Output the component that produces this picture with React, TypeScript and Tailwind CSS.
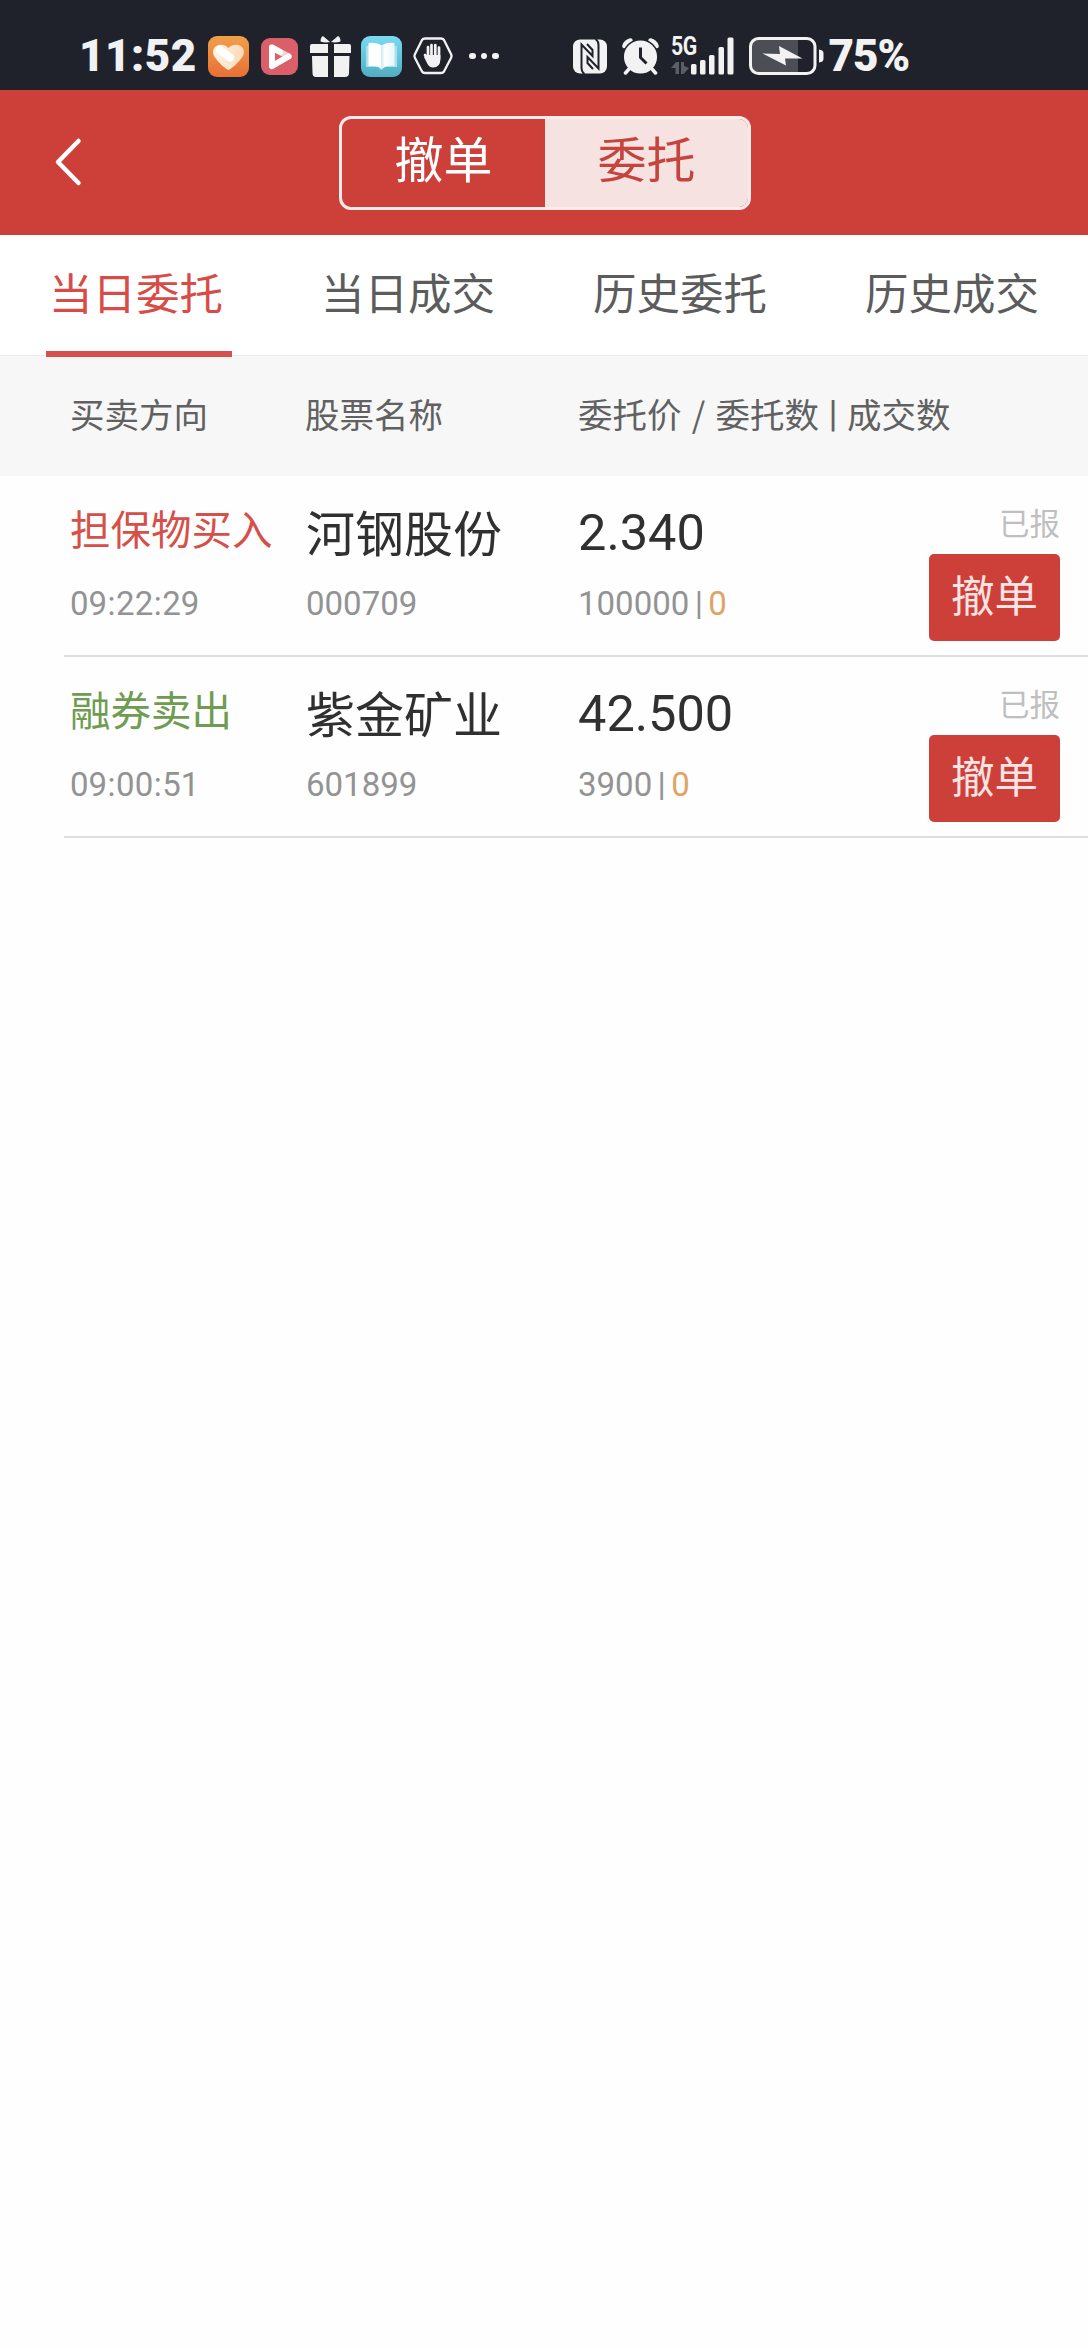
import { useState } from 'react'

type Order = {
  side: 'buy' | 'sell'
  action: string
  time: string
  name: string
  code: string
  price: string
  amount: string
  filled: string
  status: string
}

const orders: Order[] = [
  {
    side: 'buy',
    action: '担保物买入',
    time: '09:22:29',
    name: '河钢股份',
    code: '000709',
    price: '2.340',
    amount: '100000',
    filled: '0',
    status: '已报',
  },
  {
    side: 'sell',
    action: '融券卖出',
    time: '09:00:51',
    name: '紫金矿业',
    code: '601899',
    price: '42.500',
    amount: '3900',
    filled: '0',
    status: '已报',
  },
]

const tabs = ['当日委托', '当日成交', '历史委托', '历史成交']

function HeartIcon() {
  return (
    <svg className="ml-[13px] h-[41px] w-[41px]" viewBox="0 0 41 41">
      <defs>
        <linearGradient id="heartBg" x1="0" y1="0" x2="0" y2="1">
          <stop offset="0" stopColor="#f0a04b" />
          <stop offset="1" stopColor="#e96f35" />
        </linearGradient>
        <linearGradient id="heartFill" x1="0" y1="0" x2="1" y2="0">
          <stop offset="0" stopColor="#fff3e6" />
          <stop offset="1" stopColor="#fbd9b8" />
        </linearGradient>
      </defs>
      <rect width="41" height="41" rx="9" fill="url(#heartBg)" />
      <path d="M20.500 34 C18.500 34 5 22 5 16.500 C5 8 15.500 6.500 20.500 12 C25.500 6.500 36 8 36 16.500 C36 22 22.500 34 20.500 34Z" fill="url(#heartFill)" />
      <path d="M12 14 L22 21.500" stroke="#fff" strokeWidth="8" strokeLinecap="round" />
    </svg>
  )
}

function PlayIcon() {
  return (
    <svg className="ml-3 h-[37px] w-[37px]" viewBox="0 0 37 37">
      <rect width="37" height="37" rx="9" fill="#da5f68" />
      <path d="M11 9.500 L27.500 18.500 L11 28 Z" fill="none" stroke="#f7d3d3" strokeWidth="6" strokeLinejoin="round" />
      <path d="M11 28 V9.500 L19 14 M11 28 L27.500 18.500" fill="none" stroke="#fff" strokeWidth="6" strokeLinecap="round" strokeLinejoin="round" />
    </svg>
  )
}

function GiftIcon() {
  return (
    <svg className="ml-3 h-[41px] w-[41px]" viewBox="0 0 41 41" fill="#f2f2f3">
      <path d="M20 6 L13 0 Q10.500 1 10.500 5.500 Q15 7 20 6Z" />
      <path d="M21 6 L28 0 Q30.500 1 30.500 5.500 Q26 7 21 6Z" />
      <path d="M2 8 H18 V17 H0 V10 Q0 8 2 8Z" />
      <path d="M24 8 H39 Q41 8 41 10 V17 H24Z" />
      <path d="M2 20 H18 V41 H6 Q2.500 41 2.500 37Z" />
      <path d="M24 20 H39.500 L39 37 Q39 41 35 41 H24Z" />
    </svg>
  )
}

function BookIcon() {
  return (
    <svg className="ml-[10px] h-[41px] w-[41px]" viewBox="0 0 41 41">
      <defs>
        <linearGradient id="bookBg" x1="0" y1="0" x2="0" y2="1">
          <stop offset="0" stopColor="#78dcf2" />
          <stop offset="1" stopColor="#51adc1" />
        </linearGradient>
        <linearGradient id="bookPage" x1="0" y1="0" x2="1" y2="0">
          <stop offset="0" stopColor="#c9ebf3" />
          <stop offset="0.25" stopColor="#ffffff" />
          <stop offset="1" stopColor="#eaf7fa" />
        </linearGradient>
      </defs>
      <rect width="41" height="41" rx="9" fill="url(#bookBg)" />
      <path d="M5 10 H36 V31 H24 L20.500 34 L17 31 H5Z" fill="#a9e1ee" />
      <path d="M7.500 7 Q16 6 20.500 9.500 V33 Q16 29 7.500 30Z" fill="#fff" />
      <path d="M20.500 9.500 Q25 6 33.500 7 V30 Q25 29 20.500 33Z" fill="url(#bookPage)" />
    </svg>
  )
}

function HandIcon() {
  return (
    <svg className="ml-[11px] h-[38px] w-[40px]" viewBox="0 0 40 38">
      <path
        d="M12 1.500 H28 Q30 1.500 31 3 L38 17 Q39 19 38 21 L31 34.500 Q30 36 28 36 H12 Q10 36 9 34.500 L2 21 Q1 19 2 17 L9 3 Q10 1.500 12 1.500Z"
        fill="none"
        stroke="#f2f2f3"
        strokeWidth="2.300"
      />
      <g stroke="#f2f2f3" strokeWidth="2.700" strokeLinecap="round">
        <path d="M15 10 V20 M18.500 8 V20 M22.300 8 V20 M26 10.500 V22 M12 18 L15.500 23" />
      </g>
      <path d="M13.600 18 H27.400 V22 Q27.400 30.500 20 30.500 Q16.500 30.500 14.500 27 L11 20Z" fill="#f2f2f3" />
    </svg>
  )
}

function NfcIcon() {
  return (
    <svg className="ml-[74px] h-[35px] w-[34px]" viewBox="0 0 34 35">
      <rect y="0.500" width="34" height="34" rx="7" fill="#f2f2f3" />
      <path d="M11.500 35 Q8.500 33 8.500 29 V5.500 L19.500 17 V11 L14 5" fill="none" stroke="#1f222b" strokeWidth="2" />
      <path d="M22.500 0 Q25.500 2 25.500 6 V29.500 L14.500 18 V24 L20 30" fill="none" stroke="#1f222b" strokeWidth="2" />
    </svg>
  )
}

function AlarmIcon() {
  return (
    <svg className="ml-[15px] h-[37px] w-[37px]" viewBox="0 0 37 37">
      <g stroke="#f2f2f3" strokeLinecap="round" fill="none">
        <path d="M2.500 8 Q4 3.500 8.500 2.500" strokeWidth="4.500" />
        <path d="M34.500 8 Q33 3.500 28.500 2.500" strokeWidth="4.500" />
      </g>
      <circle cx="18.500" cy="19" r="17.300" fill="#f2f2f3" stroke="#1f222b" strokeWidth="1.500" />
      <path d="M7 31 L3.500 35 M30 31 L33.500 35" stroke="#f2f2f3" strokeWidth="3.500" strokeLinecap="round" />
      <path d="M18.500 9.500 V19.500 L24.500 25.500" fill="none" stroke="#1f222b" strokeWidth="3" />
    </svg>
  )
}

function SignalIcon() {
  return (
    <div className="ml-3 flex h-[38px] w-[63px]">
      <div className="flex w-5 flex-col">
        <span className="origin-left scale-x-85 text-[25px] leading-[20px] font-bold tracking-[-0.5px] whitespace-nowrap">5G</span>
        <svg className="mt-[5px] h-[13px] w-[18px]" viewBox="0 0 18 13">
          <path d="M0 6 L5 0 H8 V12 H4.500 V6Z M10 0 H13 V4 L18 6 L12.500 12 H10Z" fill="#5c5e65" />
        </svg>
      </div>
      <svg className="h-[38px] w-[43px]" viewBox="20 0 43 38" fill="#f2f2f3">
        <rect x="20" y="27" width="5.500" height="10.500" rx="1.500" />
        <rect x="29" y="23" width="5.500" height="14.500" rx="1.500" />
        <rect x="38" y="18" width="5.500" height="19.500" rx="1.500" />
        <rect x="47.500" y="10" width="5.500" height="27.500" rx="1.500" />
        <rect x="56.500" y="0.500" width="6" height="37" rx="1.500" />
      </svg>
    </div>
  )
}

function BatteryIcon() {
  return (
    <svg className="ml-[15px] h-[38px] w-[76px]" viewBox="0 0 76 38">
      <path d="M9 3 H49 V35 H9 Q3 35 3 29 V9 Q3 3 9 3Z" fill="#4c4e56" />
      <rect x="1.500" y="1.500" width="64.500" height="35" rx="8" fill="none" stroke="#f2f2f3" strokeWidth="3" />
      <path d="M13.500 16.500 L31 17 L30 9 L53.500 21.500 L36 21.500 L37 28.500Z" fill="#f2f2f3" />
      <path d="M70 12.500 Q74.500 13 74.500 16 V22 Q74.500 25 70 25.500Z" fill="#f2f2f3" />
    </svg>
  )
}

function StatusBar() {
  return (
    <div className="flex h-[90px] items-center bg-[#1f222b] pt-[22px] pl-[79px] font-[Roboto,sans-serif] text-[#f2f2f3]">
      <span className="w-[116px] text-[44px] leading-none font-black tracking-[0.5px] whitespace-nowrap">11:52</span>
      <HeartIcon />
      <PlayIcon />
      <GiftIcon />
      <BookIcon />
      <HandIcon />
      <div className="ml-4 flex gap-[5px]">
        <i className="size-[6.500px] rounded-full bg-[#f2f2f3]" />
        <i className="size-[6.500px] rounded-full bg-[#f2f2f3]" />
        <i className="size-[6.500px] rounded-full bg-[#f2f2f3]" />
      </div>
      <NfcIcon />
      <AlarmIcon />
      <SignalIcon />
      <BatteryIcon />
      <span className="ml-[4px] text-[44px] leading-none font-black tracking-[-1px]">75%</span>
    </div>
  )
}

function Header() {
  const [mode, setMode] = useState('委托')

  return (
    <header className="flex h-[145px] items-center bg-[#cd4039] pb-[2px]">
      <button className="ml-[54px] h-[50px] w-[28px]">
        <svg className="h-[50px] w-[28px]" viewBox="0 0 28 50">
          <path d="M24.500 4 L4 25 L24.500 46" fill="none" stroke="#fff" strokeWidth="4.500" strokeLinecap="round" strokeLinejoin="round" />
        </svg>
      </button>
      <div className="mt-[2px] ml-[257px] flex h-[94px] w-[412px] overflow-hidden rounded-xl border-[3px] border-[#fbeceb]">
        {['撤单', '委托'].map(item => (
          <button
            key={item}
            onClick={() => setMode(item)}
            className={`flex-1 pb-[12px] text-[49px] leading-none ${mode === item ? 'bg-[#f6e2e0] text-[#c5443e]' : 'text-white'}`}
          >
            {item}
          </button>
        ))}
      </div>
    </header>
  )
}

function Time({ value }: { value: string }) {
  return (
    <span>
      {value.split(':').map((part, i) => (
        <span key={i}>
          {i > 0 && <span className="px-[0.500px]">:</span>}
          {part}
        </span>
      ))}
    </span>
  )
}

function OrderRow({ order }: { order: Order }) {
  return (
    <li className="ml-16 flex h-[181px] border-b-2 border-[#dedede]">
      <div className="w-[242px] pl-[6px]">
        <p className={`mt-[29px] text-[40.5px] leading-[46px] whitespace-nowrap ${order.side === 'buy' ? 'text-[#d64f49]' : 'text-[#6f9c50]'}`}>
          {order.action}
        </p>
        <p className="mt-[33px] font-[Roboto,sans-serif] text-[33px] leading-[40px] text-[#939393]">
          <Time value={order.time} />
        </p>
      </div>
      <div className="w-[272px]">
        <p className="mt-[28px] text-[49px] leading-[54px] text-[#303030]">{order.name}</p>
        <p className="mt-[26px] font-[Roboto,sans-serif] text-[33px] leading-[40px] text-[#939393]">{order.code}</p>
      </div>
      <div className="flex-1 font-[Roboto,sans-serif]">
        <p className="mt-[30px] text-[50.5px] leading-[54px] text-[#303030]">{order.price}</p>
        <p className="mt-[24px] flex items-center text-[33px] leading-[40px] text-[#939393]">
          {order.amount}
          <span className="w-[19px] pb-[2px] text-center text-[34px] leading-none">|</span>
          <span className="text-[#dda465]">{order.filled}</span>
        </p>
      </div>
      <div className="mr-7 flex w-[131px] shrink-0 flex-col items-end">
        <span className="mt-[28px] text-[30.5px] leading-[36px] text-[#bfbfbf]">{order.status}</span>
        <button className="mt-[14px] h-[87px] w-[131px] rounded-[5px] bg-[#cd4039] pb-[7px] text-[43.5px] leading-none text-[#fde3e1]">撤单</button>
      </div>
    </li>
  )
}

export default function App() {
  const [tab, setTab] = useState(0)

  return (
    <div className="min-h-[2348px] w-[1088px] bg-[#fefefe] font-['Noto_Sans_CJK_SC',sans-serif]">
      <StatusBar />
      <Header />

      <nav className="grid h-[121px] grid-cols-4 border-b border-[#ececec] bg-white">
        {tabs.map((label, i) => (
          <button
            key={label}
            onClick={() => setTab(i)}
            className={`relative pb-[6px] text-[43.5px] leading-none ${tab === i ? 'text-[#d94b46]' : 'text-[#5c5c5c]'}`}
          >
            {label}
            {tab === i && <span className="absolute -bottom-[2px] left-[46px] h-[6px] w-[186px] bg-[#d65050]" />}
          </button>
        ))}
      </nav>

      <div className="flex h-[120px] items-center bg-[#f7f7f7] pb-[6px] pl-[70px] text-[34.5px] leading-none text-[#616161]">
        <span className="w-[235px]">买卖方向</span>
        <span className="w-[273px]">股票名称</span>
        <span className="flex items-center whitespace-pre">
          委托价 <span className="px-[2.500px]">/</span> 委托数
          <span className="w-[28px] text-center font-[Roboto,sans-serif] text-[37px] leading-none">|</span>
          成交数
        </span>
      </div>

      <ul>
        {orders.map(order => (
          <OrderRow key={order.code} order={order} />
        ))}
      </ul>
    </div>
  )
}
